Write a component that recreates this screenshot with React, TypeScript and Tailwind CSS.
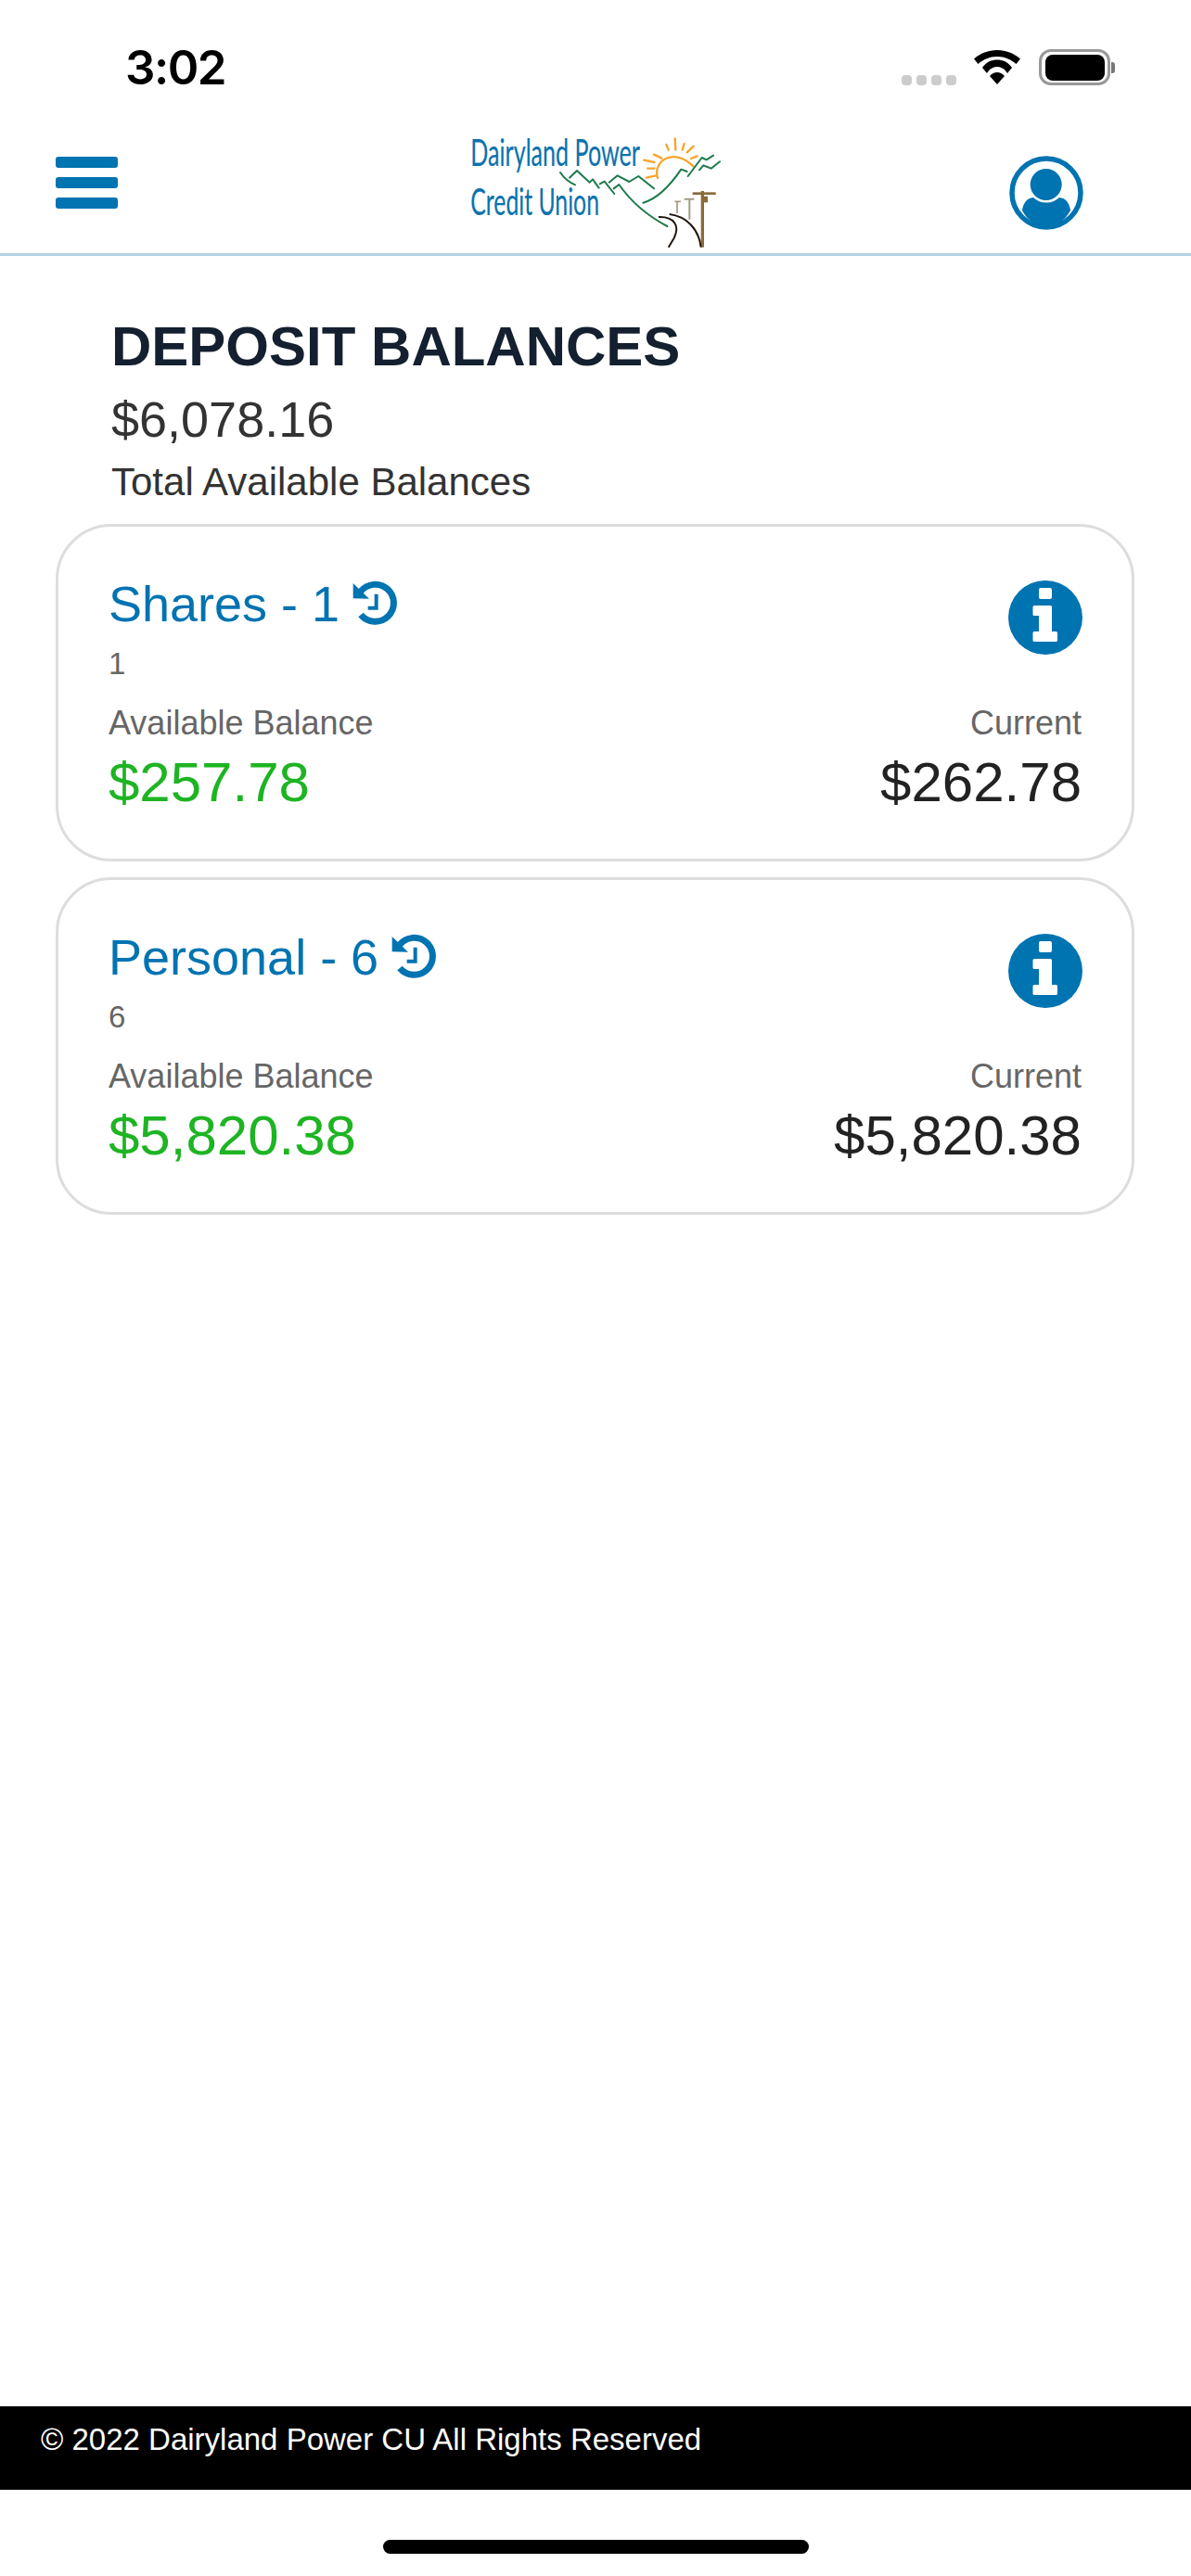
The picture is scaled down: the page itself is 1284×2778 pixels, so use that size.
const accounts = [
  { name: "Shares - 1", id: "1", available: "$257.78", current: "$262.78" },
  { name: "Personal - 6", id: "6", available: "$5,820.38", current: "$5,820.38" },
];

const Logo = () => (
  <svg width="320" height="145" viewBox="0 0 960 435" fill="none" className="block overflow-visible">
    <text x="112" y="147" fill="#0c72ae" stroke="#0c72ae" strokeWidth="0.5" fontFamily="Lato, sans-serif" fontSize="120" textLength="548" lengthAdjust="spacingAndGlyphs">
      Dairyland Power
    </text>
    <text x="112" y="307" fill="#0c72ae" stroke="#0c72ae" strokeWidth="0.5" fontFamily="Lato, sans-serif" fontSize="120" textLength="416" lengthAdjust="spacingAndGlyphs">
      Credit Union
    </text>
    <g stroke="#f5a52b" strokeWidth="7" strokeLinecap="round">
      <path d="M717 186C700 130 770 85 832 148" />
      <path d="M745 78L752 95M773 58L775 95M803 75L797 95M833 83L812 103M845 115L825 123M705 110L730 122M673 128L706 135M685 155L706 155M680 185L712 178" />
    </g>
    <g stroke="#1c7a4a" strokeWidth="6" strokeLinecap="round" strokeLinejoin="round">
      <path d="M402 168Q420 195 450 208" />
      <path d="M432 185L456 162L497 200L507 190L527 218" />
      <path d="M530 205L545 197L577 237" />
      <path d="M560 200L587 178L625 198L655 180L705 220" />
      <path d="M575 220L592 207Q650 290 748 342" />
      <path d="M670 266Q730 250 793 158L812 165" />
      <path d="M815 180L860 120L875 127L897 113" />
      <path d="M852 160L865 145L890 155L918 133" />
    </g>
    <g stroke="#a59a86" strokeWidth="6">
      <path d="M820 255V320M803 254H835" />
      <path d="M780 262V300M772 262H792" strokeWidth="5" />
    </g>
    <g stroke="#8a6a3a">
      <path d="M862 228V410" strokeWidth="10" />
      <path d="M830 236H905" strokeWidth="8" />
      <path d="M871 245V265" strokeWidth="16" />
    </g>
    <g stroke="#24170f" strokeWidth="6">
      <path d="M720 312C770 310 790 340 770 380L752 410" />
      <path d="M755 303C810 310 850 350 857 410" />
    </g>
  </svg>
);

const HistoryIcon = () => (
  <svg width="48" height="48" viewBox="120 76 144 144" fill="none" className="ml-[14px] mt-[6px] shrink-0">
    <path d="M147 187A60 60 0 1 0 146 112" stroke="#0073b1" strokeWidth="21" />
    <path d="M122 85L174 135L122 134Z" fill="#0073b1" />
    <path d="M197 120V165H170" stroke="#0073b1" strokeWidth="12" />
  </svg>
);

const InfoIcon = () => (
  <svg width="80" height="80" viewBox="0 0 80 80" className="-mr-px mt-[6px] shrink-0">
    <circle cx="40" cy="40" r="40" fill="#0073b1" />
    <rect x="33" y="8" width="14" height="12" rx="2" fill="#ffffff" />
    <path d="M28 27H45.500Q47 27 47 28.500V55H51.500Q53 55 53 56.500V64.500Q53 66 51.500 66H28Q26.500 66 26.500 64.500V56.500Q26.500 55 28 55H33V38H28Q26.500 38 26.500 36.500V28.500Q26.500 27 28 27Z" fill="#ffffff" />
  </svg>
);

const AccountCard = ({ name, id, available, current }: (typeof accounts)[number]) => (
  <div className="h-[364px] rounded-[60px] border-[3px] border-[#dddddd] bg-white pl-[54px] pr-[54px] pt-[52px]">
    <div className="flex justify-between">
      <div>
        <div className="flex items-start">
          <span className="text-[54px] leading-[62px] text-[#0073b1]">{name}</span>
          <HistoryIcon />
        </div>
        <div className="mt-[15px] text-[33px] leading-[38px] text-[#666666]">{id}</div>
      </div>
      <InfoIcon />
    </div>
    <div className="mt-[24px] flex items-start justify-between">
      <div>
        <div className="text-[36px] leading-[42px] text-[#666666]">Available Balance</div>
        <div className="mt-[8px] text-[60px] leading-[69px] text-[#1eb423]">{available}</div>
      </div>
      <div className="text-right">
        <div className="text-[36px] leading-[42px] text-[#666666]">Current</div>
        <div className="mt-[8px] text-[60px] leading-[69px] text-[#222222]">{current}</div>
      </div>
    </div>
  </div>
);

export default function App() {
  return (
    <div className="flex h-[2778px] w-[1284px] flex-col overflow-hidden bg-white font-['Liberation_Sans',sans-serif]">
      {/* status bar */}
      <div className="flex h-[130px] items-start justify-between pl-[135px] pr-[82px] pt-[40px]">
        <span className="mt-[2px] font-['Inter',sans-serif] text-[51px] font-semibold leading-[62px] tracking-[-1.5px] text-black">3:02</span>
        <div className="flex items-center pt-[13px]">
          <div className="mt-[27px] flex gap-[5px]">
            <span className="h-[11px] w-[11px] rounded-[4px] bg-[#cccccc]" />
            <span className="h-[11px] w-[11px] rounded-[4px] bg-[#cccccc]" />
            <span className="h-[11px] w-[11px] rounded-[4px] bg-[#cccccc]" />
            <span className="h-[11px] w-[11px] rounded-[4px] bg-[#cccccc]" />
          </div>
          <svg width="50" height="37" viewBox="0 0 50 37" className="ml-[19px]">
            <path d="M25 0C15.500 0 7 3.500 0 9.500L4.500 15C10 10 17 7 25 7S40 10 45.500 15L50 9.500C43 3.500 34.500 0 25 0Z" />
            <path d="M25 10.500C19 10.500 13.500 12.500 9 19L14 25C17 20 21 18 25 18S33 20 36 25L41 19C36.500 12.500 31 10.500 25 10.500Z" />
            <path d="M25 24C22 24 19.500 25.500 17 28L25 37L33 28C30.500 25.500 28 24 25 24Z" />
          </svg>
          <div className="ml-[20px] flex items-center">
            <div className="flex h-[39px] w-[77px] items-center justify-center rounded-[13px] border-[3px] border-[#999999]">
              <div className="h-[28px] w-[64px] rounded-[8px] bg-black" />
            </div>
            <div className="ml-px h-[12px] w-[4px] rounded-r-[3px] bg-[#777777]" />
          </div>
        </div>
      </div>

      {/* header */}
      <div className="relative h-[146px] border-b-[3px] border-[#b3d3e6]">
        <div className="pl-[60px] pt-[39px]">
          <div className="flex w-[67px] flex-col gap-[10px]">
            <span className="h-[12px] rounded-[3px] bg-[#0073b1]" />
            <span className="h-[12px] rounded-[3px] bg-[#0073b1]" />
            <span className="h-[12px] rounded-[3px] bg-[#0073b1]" />
          </div>
        </div>
        <div className="absolute left-[470px] top-0">
          <Logo />
        </div>
        <svg width="80" height="80" viewBox="0 0 80 80" className="absolute left-[1088px] top-[38px]" fill="#0073b1">
          <circle cx="40" cy="40" r="37" fill="none" stroke="#0073b1" strokeWidth="5.500" />
          <circle cx="39.700" cy="31" r="17" />
          <path d="M14 59C15 51 19 45.500 26 45Q32 50.500 40 50.500T54 45C61 45.500 65 51 66 59C60 70 50 77 40 77S20 70 14 59Z" />
        </svg>
      </div>

      {/* balances */}
      <div className="flex-1 px-[60px]">
        <div className="pl-[60px] pt-[63px]">
          <h1 className="text-[60px] font-bold leading-[69px] text-[#14202f]">DEPOSIT BALANCES</h1>
          <div className="mt-[13px] text-[54px] leading-[62px] text-[#333333]">$6,078.16</div>
          <div className="mt-[13px] text-[42px] leading-[48px] text-[#333333]">Total Available Balances</div>
        </div>
        <div className="mt-[21px] flex w-[1163px] flex-col gap-[17px]">
          {accounts.map((account) => (
            <AccountCard key={account.id} {...account} />
          ))}
        </div>
      </div>

      {/* footer */}
      <div className="flex h-[90px] items-start bg-black pl-[44px] pt-[17px] text-[33px] leading-[38px] text-white">
        © 2022 Dairyland Power CU All Rights Reserved
      </div>
      <div className="flex h-[93px] justify-center pt-[54px]">
        <div className="h-[15px] w-[459px] rounded-full bg-black" />
      </div>
    </div>
  );
}
